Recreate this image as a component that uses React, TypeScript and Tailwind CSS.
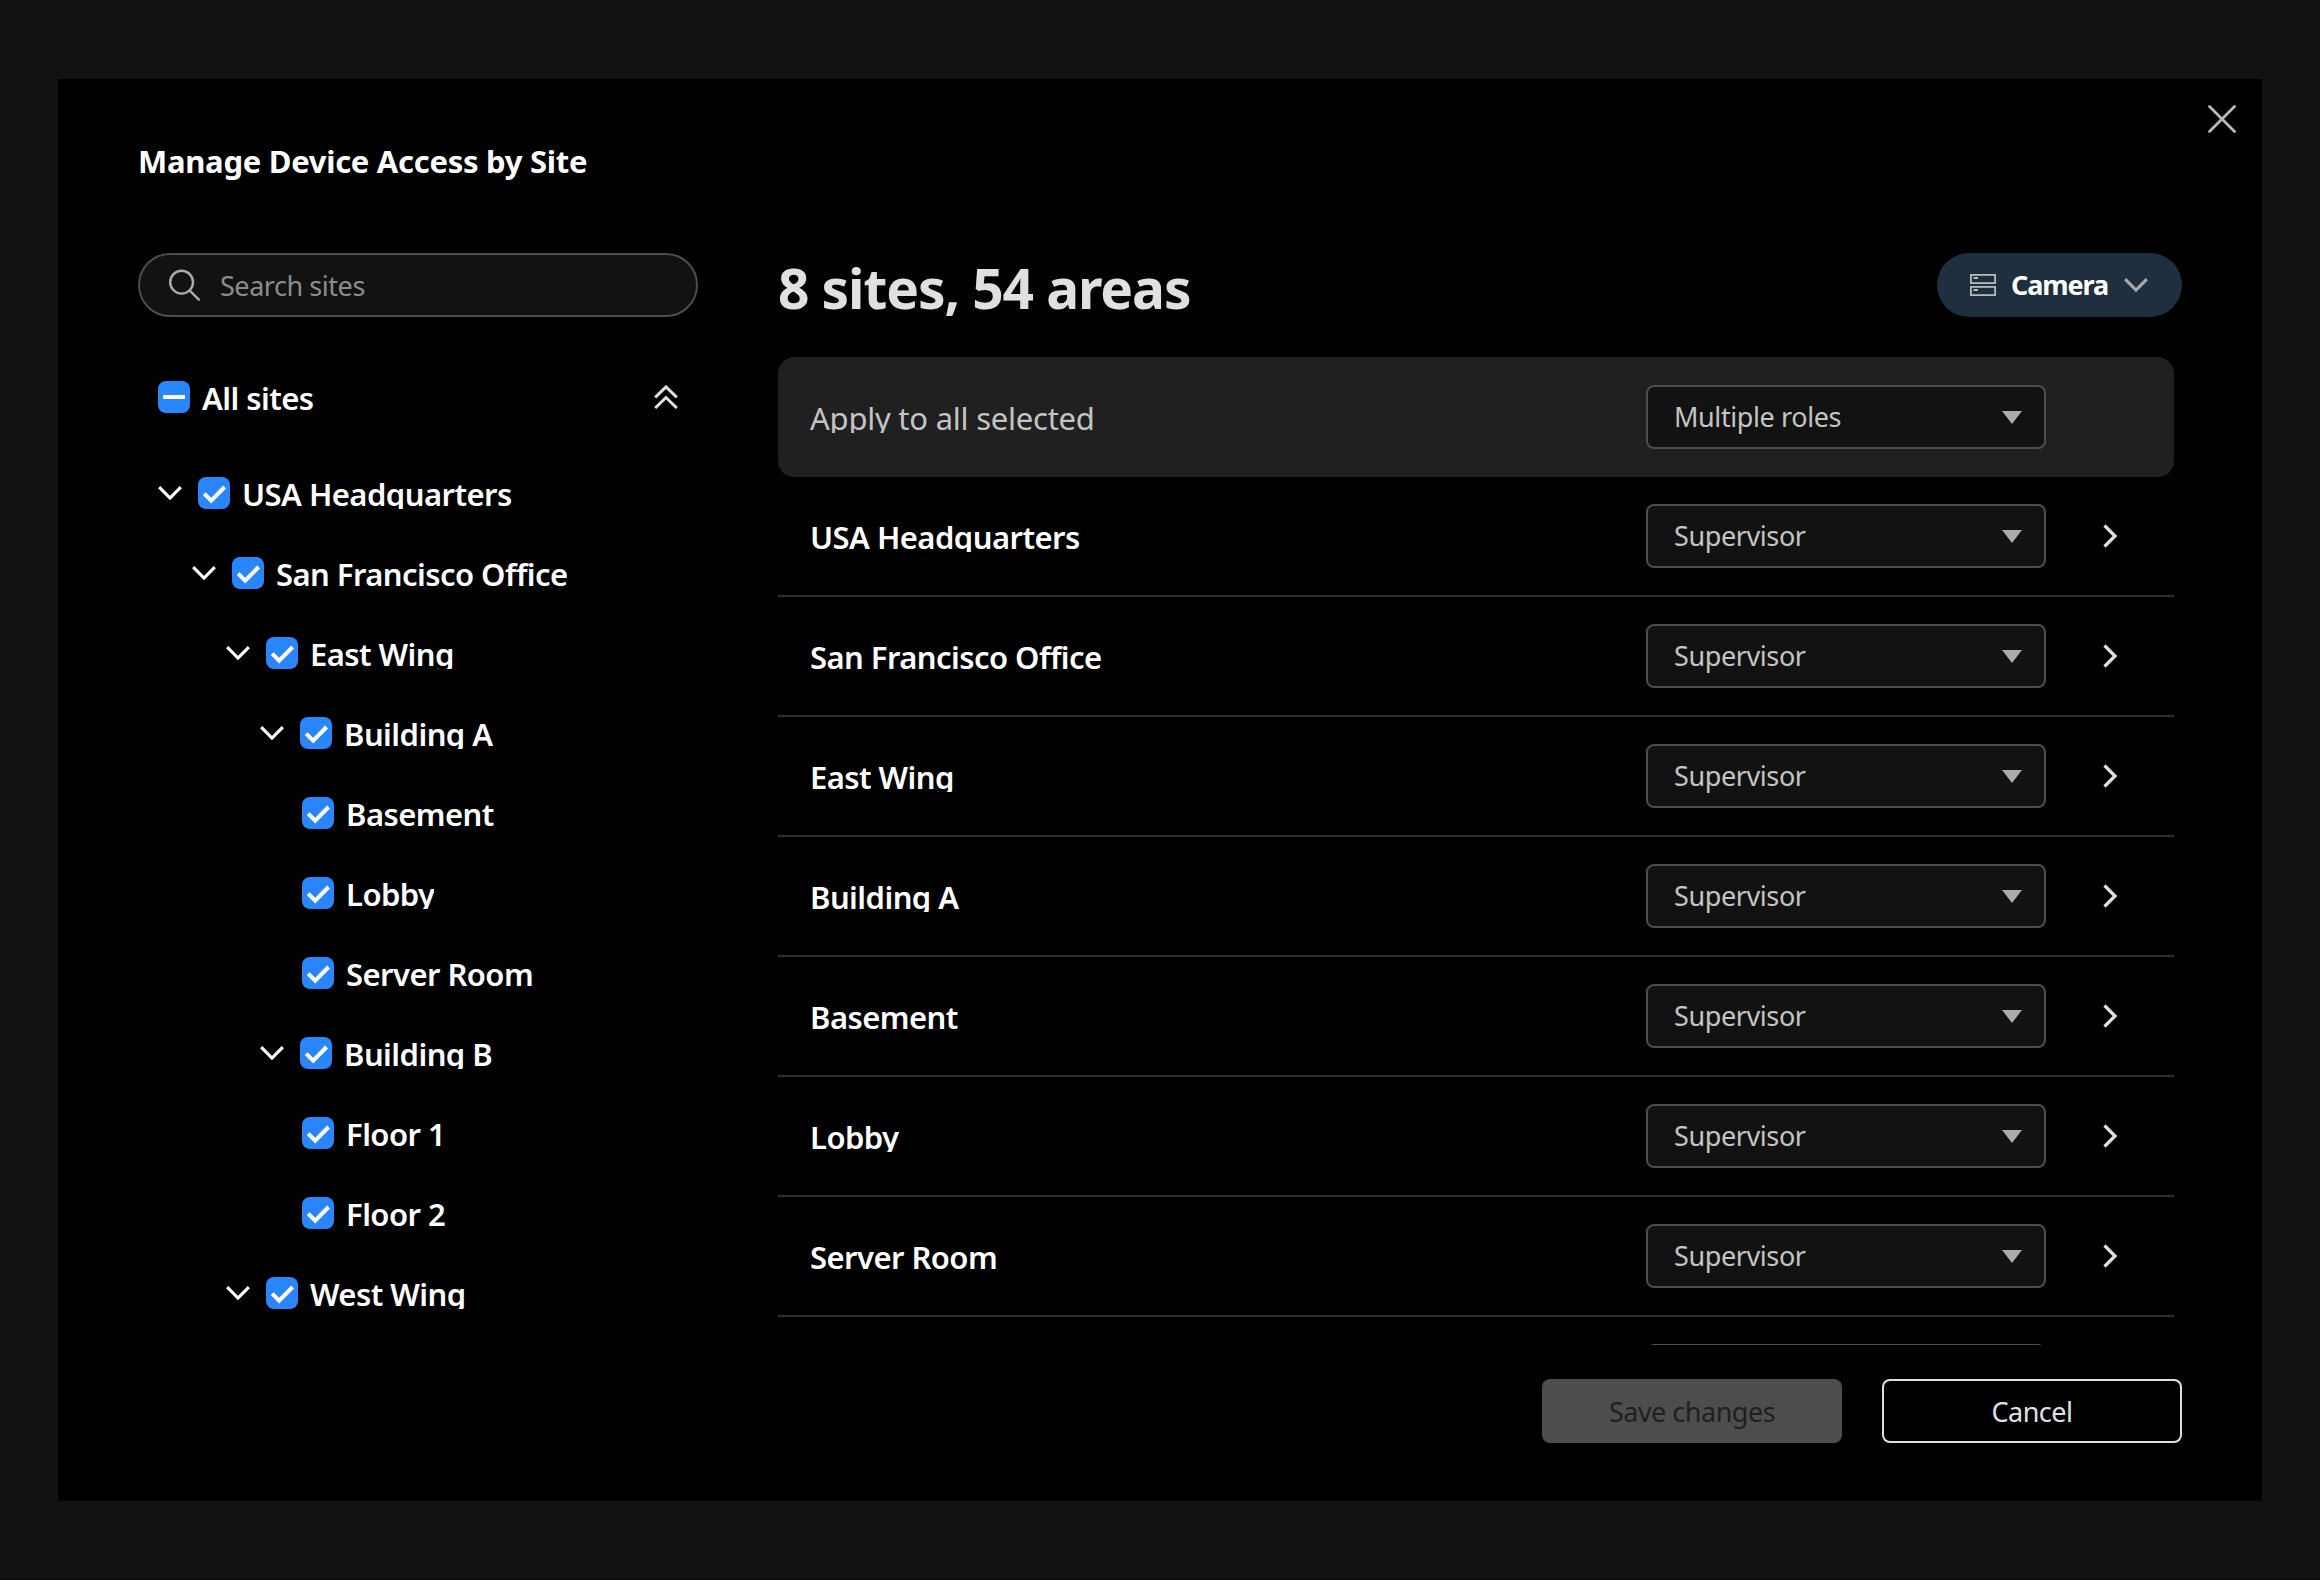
import clsx from "clsx";

type TreeNode = {
  name: string;
  level: number;
  leaf?: boolean;
};

const tree: TreeNode[] = [
  { name: "USA Headquarters", level: 0 },
  { name: "San Francisco Office", level: 1 },
  { name: "East Wing", level: 2 },
  { name: "Building A", level: 3 },
  { name: "Basement", level: 3, leaf: true },
  { name: "Lobby", level: 3, leaf: true },
  { name: "Server Room", level: 3, leaf: true },
  { name: "Building B", level: 3 },
  { name: "Floor 1", level: 3, leaf: true },
  { name: "Floor 2", level: 3, leaf: true },
  { name: "West Wing", level: 2 },
];

const indents = ["pl-5", "pl-[54px]", "pl-[88px]", "pl-[122px]"];

const siteRows = [
  "USA Headquarters",
  "San Francisco Office",
  "East Wing",
  "Building A",
  "Basement",
  "Lobby",
  "Server Room",
  "Building B",
];

const CloseIcon = () => (
  <svg className="size-7" viewBox="0 0 28 28" fill="none" stroke="#b8b8b8" strokeWidth="2.8" strokeLinecap="round">
    <path d="M1.5 1.5l25 25M26.5 1.5l-25 25" />
  </svg>
);

const SearchIcon = () => (
  <svg className="size-8 shrink-0" viewBox="0 0 32 32" fill="none" stroke="#ababab" strokeWidth="2.4" strokeLinecap="round">
    <circle cx="13.6" cy="13.2" r="11.4" />
    <path d="M21.8 21.6l9 9" />
  </svg>
);

const ChevronDown = () => (
  <svg className="h-4 w-6 shrink-0" viewBox="0 0 24 16" fill="none" stroke="#fff" strokeWidth="3.1">
    <path d="M1.2 2.2L12 13l10.8-10.8" />
  </svg>
);

const ServerIcon = () => (
  <svg className="h-[22px] w-[26px]" viewBox="0 0 26 22" fill="none" stroke="#b8b8b8">
    <rect x="0.9" y="0.9" width="24.2" height="8.2" strokeWidth="1.8" />
    <rect x="0.9" y="12.9" width="24.2" height="8.2" strokeWidth="1.8" />
    <path d="M3.5 4h4.5M3.5 16h4.5" strokeWidth="2" />
  </svg>
);

type CheckboxProps = {
  indeterminate?: boolean;
};

const Checkbox = ({ indeterminate }: CheckboxProps) => (
  <span className="size-8 shrink-0 rounded-lg bg-[#2a86ff]">
    <svg viewBox="0 0 32 32" fill="none" stroke="#fff" strokeWidth="4">
      <path d={indeterminate ? "M5 16h22" : "M6.2 16.6l7 7L26.6 10"} />
    </svg>
  </span>
);

type RoleSelectProps = {
  value: string;
};

const RoleSelect = ({ value }: RoleSelectProps) => (
  <button className="flex h-16 w-[400px] shrink-0 items-center justify-between rounded-lg border-2 border-[#4d4d4d] bg-[#121212] pr-[22px] pl-[26px] text-[27px] tracking-[-0.4px] text-[#c4c4c4]">
    <span className="pt-px">{value}</span>
    <svg className="h-3.5 w-5" viewBox="0 0 20 14" fill="#ababab">
      <path d="M0 1h20L10 14z" />
    </svg>
  </button>
);

const SiteTree = () => {
  return (
    <aside className="flex w-[560px] flex-col">
      <label className="flex h-16 items-center gap-5 rounded-full border-2 border-[#4d4d4d] bg-[#121212] px-7 text-[27px] tracking-[-0.45px] text-[#8c8c8c]">
        <SearchIcon />
        <span className="pt-0.5">Search sites</span>
      </label>

      <div className="mt-16 flex h-8 items-center pr-5 pl-5">
        <Checkbox indeterminate />
        <span className="ml-3 h-8 flex-1 text-[31px] leading-[34px] font-semibold tracking-[-0.55px]">All sites</span>
        <svg className="size-6" viewBox="0 0 24 24" fill="none" stroke="#e0e0e0" strokeWidth="3">
          <path d="M1.2 12.4L12 1.9l10.8 10.5M1.2 23L12 12.5 22.8 23" />
        </svg>
      </div>

      <ul className="mt-10">
        {tree.map((node) => (
          <li key={node.name} className={clsx("flex h-20 items-center", indents[node.level])}>
            {node.leaf ? <span className="w-[42px]" /> : <><ChevronDown /><span className="w-4" /></>}
            <Checkbox />
            <span className="ml-3 h-8 overflow-hidden text-[31px] leading-[34px] font-semibold tracking-[-0.55px] whitespace-nowrap">
              {node.name}
            </span>
          </li>
        ))}
      </ul>
    </aside>
  );
};

const SiteAccess = () => {
  return (
    <section className="flex h-[1092px] w-[1404px] flex-col overflow-hidden">
      <div className="flex h-16 items-center justify-between">
        <h2 className="pt-[5px] text-[55px] leading-[64px] font-bold tracking-[-1.1px] text-[#e0e0e0]">8 sites, 54 areas</h2>
        <button className="flex h-16 w-[245px] items-center rounded-full bg-[#1f2f3f] pl-[33px] text-[27px] font-bold tracking-[-1.1px]">
          <ServerIcon />
          <span className="ml-[15px] w-[98px] text-left">Camera</span>
          <svg className="ml-[15px] h-4 w-6" viewBox="0 0 24 16" fill="none" stroke="#ababab" strokeWidth="3.1">
            <path d="M1.2 2.2L12 13l10.8-10.8" />
          </svg>
        </button>
      </div>

      <div className="mt-10 w-[1396px]">
        <div className="flex h-[120px] items-center rounded-2xl bg-[#202020] pl-8">
          <span className="h-8 flex-1 overflow-hidden text-[31px] leading-[34px] tracking-[-0.24px] text-[#c4c4c4]">
            Apply to all selected
          </span>
          <RoleSelect value="Multiple roles" />
          <span className="w-32" />
        </div>

        {siteRows.map((name) => (
          <div key={name} className="flex h-[120px] items-center border-b-2 border-[#2e2e2e] pl-8">
            <span className="h-8 flex-1 overflow-hidden text-[31px] leading-[34px] font-semibold tracking-[-0.55px]">
              {name}
            </span>
            <RoleSelect value="Supervisor" />
            <span className="flex w-32 justify-center">
              <svg className="h-6 w-4" viewBox="0 0 16 24" fill="none" stroke="#e0e0e0" strokeWidth="3.2">
                <path d="M2.5 1.5L13 12 2.5 22.5" />
              </svg>
            </span>
          </div>
        ))}
      </div>
    </section>
  );
};

export default function App() {
  return (
    <div className="flex h-[1580px] w-[2320px] flex-col border-b border-[#0a050a] bg-[#121212] pt-[79px] pl-[58px] font-['Noto_Sans','Open_Sans',sans-serif] text-white">
      <div className="flex h-[1422px] w-[2204px] shrink-0 flex-col bg-black pr-[26px] pl-20">
        <div className="flex justify-between pt-[26px]">
          <h1 className="mt-[31px] mb-px text-[31px] leading-[50px] font-bold tracking-[-0.28px]">
            Manage Device Access by Site
          </h1>
          <button className="h-7">
            <CloseIcon />
          </button>
        </div>

        <div className="mt-[66px] flex h-[1092px] gap-20">
          <SiteTree />
          <SiteAccess />
        </div>

        <div className="mt-[34px] flex justify-end gap-10 pr-[54px] text-[27px] tracking-[-0.5px]">
          <button className="h-16 w-[300px] rounded-lg bg-[#4d4d4d] pt-0.5 text-[#202020]">Save changes</button>
          <button className="h-16 w-[300px] rounded-lg border-2 border-[#e0e0e0] pt-0.5 text-[#e0e0e0]">Cancel</button>
        </div>
      </div>
    </div>
  );
}
